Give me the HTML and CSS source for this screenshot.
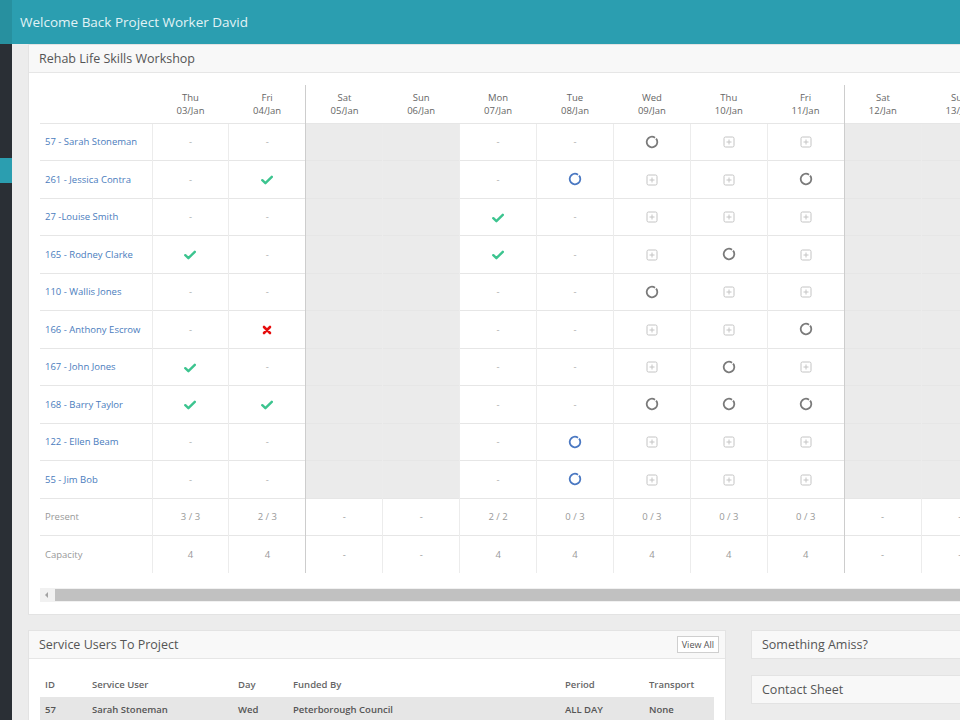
FILE: index.html
```html
<!DOCTYPE html>
<html>
<head>
<meta charset="UTF-8" />
<title>Project Worker</title>
<link rel="stylesheet" href="styles.css">
</head>
<body>

<svg class="defs" width="0" height="0">
  <symbol id="i-check" viewBox="0 0 12 10">
    <polyline points="1.3,5.2 4.4,8.2 10.8,1.8" fill="none" stroke="currentColor" stroke-width="2.4" stroke-linecap="round" stroke-linejoin="round" />
  </symbol>
  <symbol id="i-cross" viewBox="0 0 10 10">
    <path d="M2 2 L8 8 M8 2 L2 8" fill="none" stroke="currentColor" stroke-width="2.6" stroke-linecap="round" />
  </symbol>
  <symbol id="i-ring" viewBox="0 0 14 14">
    <circle cx="7" cy="7" r="5.3" fill="none" stroke="currentColor" stroke-width="1.8" stroke-dasharray="31 2.3" transform="rotate(-40 7 7)" />
  </symbol>
  <symbol id="i-plus" viewBox="0 0 12 12">
    <rect x="1" y="1" width="10" height="10" rx="1.5" fill="none" stroke="currentColor" stroke-width="1" />
    <path d="M6 3.5 V8.5 M3.5 6 H8.5" stroke="currentColor" stroke-width="1" />
  </symbol>
</svg>

<div class="topbar">
  <div class="topbar-edge"></div>
  <div class="topbar-title">Welcome Back Project Worker David</div>
</div>

<div class="frame">
  <div class="sidebar">
    <div class="sidebar-active"></div>
  </div>

  <div class="content">

    <div class="panel">
      <div class="panel-head">Rehab Life Skills Workshop</div>
      <div class="panel-body">
        <table class="sched">
          <colgroup>
            <col class="c-name" />
            <col class="c-day" span="11" />
          </colgroup>
          <thead>
            <tr>
              <th></th>
              <th>Thu<br />03/Jan</th>
              <th>Fri<br />04/Jan</th>
              <th class="wk">Sat<br />05/Jan</th>
              <th>Sun<br />06/Jan</th>
              <th>Mon<br />07/Jan</th>
              <th>Tue<br />08/Jan</th>
              <th>Wed<br />09/Jan</th>
              <th>Thu<br />10/Jan</th>
              <th>Fri<br />11/Jan</th>
              <th class="wk">Sat<br />12/Jan</th>
              <th>Sun<br />13/Jan</th>
            </tr>
          </thead>
          <tbody>
            <tr>
              <td class="name">57 - Sarah Stoneman</td>
              <td>-</td><td>-</td>
              <td class="wk we"></td><td class="we"></td>
              <td>-</td><td>-</td>
              <td><svg class="ic ring"><use href="#i-ring" /></svg></td>
              <td><svg class="ic plus"><use href="#i-plus" /></svg></td>
              <td><svg class="ic plus"><use href="#i-plus" /></svg></td>
              <td class="wk we"></td><td class="we"></td>
            </tr>
            <tr>
              <td class="name">261 - Jessica Contra</td>
              <td>-</td>
              <td><svg class="ic check"><use href="#i-check" /></svg></td>
              <td class="wk we"></td><td class="we"></td>
              <td>-</td>
              <td><svg class="ic ring blue"><use href="#i-ring" /></svg></td>
              <td><svg class="ic plus"><use href="#i-plus" /></svg></td>
              <td><svg class="ic plus"><use href="#i-plus" /></svg></td>
              <td><svg class="ic ring"><use href="#i-ring" /></svg></td>
              <td class="wk we"></td><td class="we"></td>
            </tr>
            <tr>
              <td class="name">27 -Louise Smith</td>
              <td>-</td><td>-</td>
              <td class="wk we"></td><td class="we"></td>
              <td><svg class="ic check"><use href="#i-check" /></svg></td>
              <td>-</td>
              <td><svg class="ic plus"><use href="#i-plus" /></svg></td>
              <td><svg class="ic plus"><use href="#i-plus" /></svg></td>
              <td><svg class="ic plus"><use href="#i-plus" /></svg></td>
              <td class="wk we"></td><td class="we"></td>
            </tr>
            <tr>
              <td class="name">165 - Rodney Clarke</td>
              <td><svg class="ic check"><use href="#i-check" /></svg></td>
              <td>-</td>
              <td class="wk we"></td><td class="we"></td>
              <td><svg class="ic check"><use href="#i-check" /></svg></td>
              <td>-</td>
              <td><svg class="ic plus"><use href="#i-plus" /></svg></td>
              <td><svg class="ic ring"><use href="#i-ring" /></svg></td>
              <td><svg class="ic plus"><use href="#i-plus" /></svg></td>
              <td class="wk we"></td><td class="we"></td>
            </tr>
            <tr>
              <td class="name">110 - Wallis Jones</td>
              <td>-</td><td>-</td>
              <td class="wk we"></td><td class="we"></td>
              <td>-</td><td>-</td>
              <td><svg class="ic ring"><use href="#i-ring" /></svg></td>
              <td><svg class="ic plus"><use href="#i-plus" /></svg></td>
              <td><svg class="ic plus"><use href="#i-plus" /></svg></td>
              <td class="wk we"></td><td class="we"></td>
            </tr>
            <tr>
              <td class="name">166 - Anthony Escrow</td>
              <td>-</td>
              <td><svg class="ic cross"><use href="#i-cross" /></svg></td>
              <td class="wk we"></td><td class="we"></td>
              <td>-</td><td>-</td>
              <td><svg class="ic plus"><use href="#i-plus" /></svg></td>
              <td><svg class="ic plus"><use href="#i-plus" /></svg></td>
              <td><svg class="ic ring"><use href="#i-ring" /></svg></td>
              <td class="wk we"></td><td class="we"></td>
            </tr>
            <tr>
              <td class="name">167 - John Jones</td>
              <td><svg class="ic check"><use href="#i-check" /></svg></td>
              <td>-</td>
              <td class="wk we"></td><td class="we"></td>
              <td>-</td><td>-</td>
              <td><svg class="ic plus"><use href="#i-plus" /></svg></td>
              <td><svg class="ic ring"><use href="#i-ring" /></svg></td>
              <td><svg class="ic plus"><use href="#i-plus" /></svg></td>
              <td class="wk we"></td><td class="we"></td>
            </tr>
            <tr>
              <td class="name">168 - Barry Taylor</td>
              <td><svg class="ic check"><use href="#i-check" /></svg></td>
              <td><svg class="ic check"><use href="#i-check" /></svg></td>
              <td class="wk we"></td><td class="we"></td>
              <td>-</td><td>-</td>
              <td><svg class="ic ring"><use href="#i-ring" /></svg></td>
              <td><svg class="ic ring"><use href="#i-ring" /></svg></td>
              <td><svg class="ic ring"><use href="#i-ring" /></svg></td>
              <td class="wk we"></td><td class="we"></td>
            </tr>
            <tr>
              <td class="name">122 - Ellen Beam</td>
              <td>-</td><td>-</td>
              <td class="wk we"></td><td class="we"></td>
              <td>-</td>
              <td><svg class="ic ring blue"><use href="#i-ring" /></svg></td>
              <td><svg class="ic plus"><use href="#i-plus" /></svg></td>
              <td><svg class="ic plus"><use href="#i-plus" /></svg></td>
              <td><svg class="ic plus"><use href="#i-plus" /></svg></td>
              <td class="wk we"></td><td class="we"></td>
            </tr>
            <tr>
              <td class="name">55 - Jim Bob</td>
              <td>-</td><td>-</td>
              <td class="wk we"></td><td class="we"></td>
              <td>-</td>
              <td><svg class="ic ring blue"><use href="#i-ring" /></svg></td>
              <td><svg class="ic plus"><use href="#i-plus" /></svg></td>
              <td><svg class="ic plus"><use href="#i-plus" /></svg></td>
              <td><svg class="ic plus"><use href="#i-plus" /></svg></td>
              <td class="wk we"></td><td class="we"></td>
            </tr>
            <tr class="total">
              <td class="label">Present</td>
              <td>3 / 3</td><td>2 / 3</td>
              <td class="wk">-</td><td>-</td>
              <td>2 / 2</td><td>0 / 3</td><td>0 / 3</td><td>0 / 3</td><td>0 / 3</td>
              <td class="wk">-</td><td>-</td>
            </tr>
            <tr class="total">
              <td class="label">Capacity</td>
              <td>4</td><td>4</td>
              <td class="wk">-</td><td>-</td>
              <td>4</td><td>4</td><td>4</td><td>4</td><td>4</td>
              <td class="wk">-</td><td>-</td>
            </tr>
          </tbody>
        </table>

        <div class="hscroll">
          <div class="hscroll-arrow"></div>
          <div class="hscroll-thumb"></div>
        </div>
      </div>
    </div>

    <div class="row2">
      <div class="panel panel-users">
        <div class="panel-head">
          Service Users To Project
          <button class="btn-small">View All</button>
        </div>
        <div class="panel-body">
          <table class="users">
            <thead>
              <tr>
                <th class="u-id">ID</th>
                <th class="u-name">Service User</th>
                <th class="u-day">Day</th>
                <th class="u-fund">Funded By</th>
                <th class="u-period">Period</th>
                <th>Transport</th>
              </tr>
            </thead>
            <tbody>
              <tr>
                <td>57</td>
                <td>Sarah Stoneman</td>
                <td>Wed</td>
                <td>Peterborough Council</td>
                <td>ALL DAY</td>
                <td>None</td>
              </tr>
            </tbody>
          </table>
        </div>
      </div>

      <div class="side-col">
        <div class="panel">
          <div class="panel-head solo">Something Amiss?</div>
        </div>
        <div class="panel">
          <div class="panel-head solo">Contact Sheet</div>
        </div>
      </div>
    </div>

  </div>
</div>

</body>
</html>
```

FILE: styles.css
```css
* {
  box-sizing: border-box;
}

html, body {
  margin: 0;
  padding: 0;
}

body {
  width: 960px;
  height: 720px;
  overflow: hidden;
  background: #ececec;
  font-family: "Open Sans", "Liberation Sans", sans-serif;
  color: #555;
}

svg.defs {
  position: absolute;
}

/* top bar */

.topbar {
  display: flex;
  height: 44px;
  background: #2b9eb0;
}

.topbar-edge {
  width: 12px;
  background: #27909f;
}

.topbar-title {
  padding-left: 8px;
  line-height: 44px;
  font-size: 13.5px;
  color: #e2f3f6;
}

/* frame */

.frame {
  display: flex;
  height: 676px;
}

.sidebar {
  flex: none;
  width: 12px;
  padding-top: 114px;
  background: #2a2f35;
}

.sidebar-active {
  height: 25px;
  background: #2b9eb0;
}

.content {
  flex: none;
  width: 1040px;
  padding-left: 16px;
}

/* panels */

.panel {
  background: #fff;
  border: 1px solid #e3e3e3;
}

.panel-head {
  display: flex;
  justify-content: space-between;
  align-items: center;
  height: 28px;
  padding: 0 6px 1px 10px;
  background: #f8f8f8;
  border-bottom: 1px solid #e6e6e6;
  font-size: 12.5px;
  color: #555;
}

.panel-head.solo {
  height: 27px;
  border-bottom: none;
}

.panel-body {
  padding: 12px 11px 12px 11px;
}

.btn-small {
  height: 17px;
  padding: 0 4px;
  background: #fff;
  border: 1px solid #cfcfcf;
  font-family: inherit;
  font-size: 9px;
  color: #555;
}

/* schedule table */

.sched {
  border-collapse: collapse;
  table-layout: fixed;
  width: 958px;
  font-size: 9.5px;
}

.sched col.c-name {
  width: 112px;
}

.sched col.c-day {
  width: 76.9px;
}

.sched th {
  height: 38px;
  padding: 0;
  font-weight: normal;
  line-height: 13px;
  color: #666;
}

.sched td {
  height: 37.5px;
  padding: 0;
  text-align: center;
  color: #aaa;
  border-top: 1px solid #e6e6e6;
  border-left: 1px solid #ececec;
}

.sched .wk {
  border-left: 1px solid #cdcdcd;
}

.sched td.we {
  background: #ebebeb;
}

.sched td.name {
  padding-left: 5px;
  text-align: left;
  color: #4a7cbd;
  border-left: none;
}

.sched tr.total td {
  color: #999;
}

.sched tr.total td.label {
  padding-left: 5px;
  text-align: left;
  border-left: none;
}

.ic {
  display: inline-block;
  vertical-align: middle;
}

.ic.check {
  width: 12px;
  height: 10px;
  color: #3cc48f;
}

.ic.cross {
  width: 10px;
  height: 10px;
  color: #e60d0d;
}

.ic.ring {
  width: 14px;
  height: 14px;
  color: #7a7a7a;
}

.ic.ring.blue {
  color: #4a78c2;
}

.ic.plus {
  width: 12px;
  height: 12px;
  color: #c4c4c4;
}

/* fake scrollbar */

.hscroll {
  display: flex;
  height: 14px;
  margin-top: 15px;
  background: #f1f1f1;
}

.hscroll-arrow {
  position: relative;
  width: 15px;
}

.hscroll-arrow:after {
  content: "";
  position: absolute;
  left: 5px;
  top: 4px;
  border-top: 3px solid transparent;
  border-bottom: 3px solid transparent;
  border-right: 3px solid #a3a3a3;
}

.hscroll-thumb {
  flex: 1;
  margin: 1px 0;
  background: #c1c1c1;
}

/* lower row */

.row2 {
  display: flex;
  align-items: flex-start;
  gap: 25px;
  margin-top: 15px;
}

.panel-users {
  flex: none;
  width: 698px;
}

.side-col {
  flex: 1;
  display: flex;
  flex-direction: column;
  gap: 16px;
}

.users {
  width: 100%;
  border-collapse: collapse;
  font-size: 9.5px;
}

.users th {
  height: 26px;
  padding: 0 5px;
  text-align: left;
  font-weight: 600;
  color: #666;
}

.users td {
  height: 24px;
  padding: 0 5px;
  background: #e6e6e6;
  font-weight: 600;
  color: #555;
}

.users .u-id { width: 47px; }
.users .u-name { width: 146px; }
.users .u-day { width: 55px; }
.users .u-fund { width: 272px; }
.users .u-period { width: 84px; }
```
